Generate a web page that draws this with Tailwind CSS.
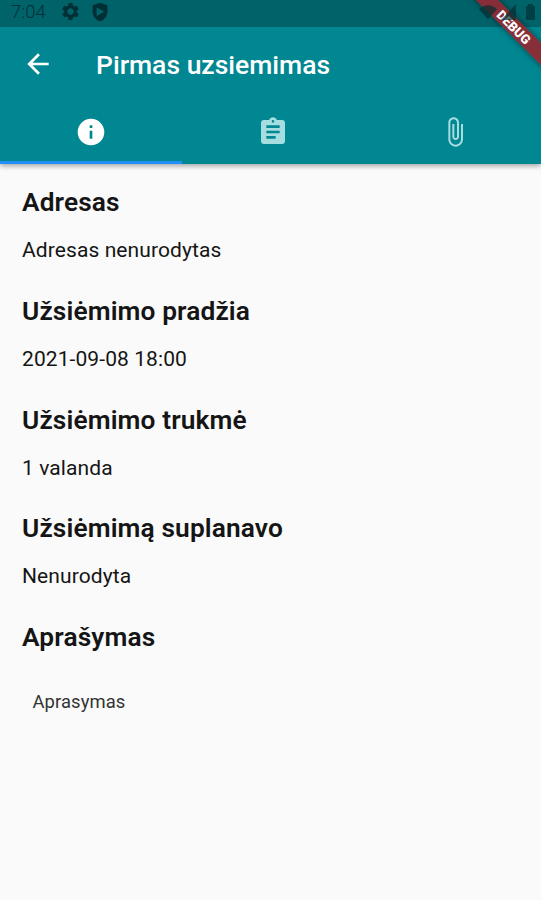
<!DOCTYPE html>
<html lang="lt">
<head>
    <meta charset="UTF-8" />
    <meta name="viewport" content="width=device-width, initial-scale=1.0" />
    <title>Pirmas uzsiemimas</title>
    <script src="https://cdn.jsdelivr.net/npm/@tailwindcss/browser@4"></script>
</head>

<body class="bg-[#fafafa] font-['Roboto',sans-serif]">
    <div class="relative h-[900px] w-[541px] overflow-hidden">
        <!-- Header -->
        <header class="relative h-[164px] bg-[#008791] shadow-[0_2px_5px_rgba(0,0,0,0.35)]">
            <!-- Status bar -->
            <div class="flex h-[27px] items-center bg-[#00636a] pb-[4px] pl-[11px] text-[#003035]">
                <span class="w-[49px] text-[18.5px] leading-6 font-light">7:04</span>
                <svg class="h-[21px] w-[21px]" viewBox="0 0 24 24" fill="currentColor">
                    <path d="M19.14 12.94c.04-.3.06-.61.06-.94 0-.32-.02-.64-.07-.94l2.03-1.58a.49.49 0 0 0 .12-.61l-1.92-3.32a.488.488 0 0 0-.59-.22l-2.39.96c-.5-.38-1.03-.7-1.62-.94l-.36-2.54a.484.484 0 0 0-.48-.41h-3.84c-.24 0-.43.17-.47.41l-.36 2.54c-.59.24-1.13.57-1.62.94l-2.39-.96c-.22-.08-.47 0-.59.22L2.74 8.87c-.12.21-.08.47.12.61l2.03 1.58c-.05.3-.09.63-.09.94s.02.64.07.94l-2.03 1.58a.49.49 0 0 0-.12.61l1.92 3.32c.12.22.37.29.59.22l2.39-.96c.5.38 1.03.7 1.62.94l.36 2.54c.05.24.24.41.48.41h3.84c.24 0 .44-.17.47-.41l.36-2.54c.59-.24 1.13-.56 1.62-.94l2.39.96c.22.08.47 0 .59-.22l1.92-3.32c.12-.22.07-.47-.12-.61l-2.01-1.58zM12 15.6c-1.98 0-3.6-1.62-3.6-3.6s1.62-3.6 3.6-3.6 3.6 1.62 3.6 3.6-1.62 3.6-3.6 3.6z" />
                </svg>
                <svg class="ml-[9px] h-[20px] w-[20px]" viewBox="0 0 24 24" fill="currentColor" fill-rule="evenodd">
                    <path d="M12 1 3 4v7c0 5.55 3.84 10.74 9 12 5.16-1.26 9-6.45 9-12V4zM8 6.5v10.5L17 11.5z" />
                </svg>
                <!-- Shown over the debug banner -->
                <div class="relative z-10 ml-auto flex items-center pr-[5px] text-[#002f34]/70">
                    <svg class="h-[18px] w-[20px]" viewBox="0 0 22 18" fill="currentColor">
                        <path d="M11 17 1 6C7 0 15 0 21 6z" />
                    </svg>
                    <svg class="ml-[3px] h-[18px] w-[16px]" viewBox="0 0 16 18" fill="currentColor">
                        <path d="M15 1v16H0z" />
                    </svg>
                    <svg class="ml-[8px] h-[18px] w-[11px]" viewBox="0 0 11 18" fill="currentColor">
                        <path d="M3 1h5v2h2v14H1V3h2z" />
                    </svg>
                </div>
            </div>

            <!-- Title -->
            <div class="flex h-[75px] items-center pb-[2px] pl-[21.5px] text-white">
                <svg class="h-8 w-8" viewBox="0 0 24 24" fill="currentColor">
                    <path d="M20 11H7.830l5.590-5.590L12 4l-8 8 8 8 1.410-1.410L7.830 13H20v-2z" />
                </svg>
                <h1 class="ml-[42.5px] pt-[3px] text-[26.5px] font-medium">Pirmas uzsiemimas</h1>
            </div>

            <!-- Tabs -->
            <nav class="-mr-[6px] grid h-[62px] grid-cols-3 text-[#a6dde0]">
                <div class="flex items-center justify-center border-b-[3px] border-[#2090f8] text-white">
                    <svg class="h-8 w-8" viewBox="0 0 24 24" fill="currentColor">
                        <path d="M12 2C6.480 2 2 6.480 2 12s4.480 10 10 10 10-4.480 10-10S17.520 2 12 2zm1 15h-2v-6h2v6zm0-8h-2V7h2v2z" />
                    </svg>
                </div>
                <div class="flex items-center justify-center pb-[3px]">
                    <svg class="h-8 w-8" viewBox="0 0 24 24" fill="currentColor">
                        <path d="M19 3h-4.180C14.400 1.840 13.300 1 12 1c-1.300 0-2.400.840-2.820 2H5c-1.100 0-2 .900-2 2v14c0 1.100.900 2 2 2h14c1.100 0 2-.900 2-2V5c0-1.100-.900-2-2-2zm-7 0c.550 0 1 .450 1 1s-.450 1-1 1-1-.450-1-1 .450-1 1-1zm2 14H7v-2h7v2zm3-4H7v-2h10v2zm0-4H7V7h10v2z" />
                    </svg>
                </div>
                <div class="flex items-center justify-center pr-[2px] pb-[2px]">
                    <svg class="h-8 w-8" viewBox="0 0 24 24" fill="currentColor">
                        <path d="M16.500 6v11.500c0 2.210-1.790 4-4 4s-4-1.790-4-4V5c0-1.380 1.120-2.500 2.500-2.500s2.500 1.120 2.500 2.500v10.500c0 .550-.450 1-1 1s-1-.450-1-1V6H10v9.500c0 1.380 1.120 2.500 2.500 2.500s2.500-1.120 2.500-2.500V5c0-2.210-1.790-4-4-4S7 2.790 7 5v12.500c0 3.040 2.460 5.500 5.500 5.500s5.500-2.460 5.500-5.500V6h-1.500z" />
                    </svg>
                </div>
            </nav>
        </header>

        <!-- Details -->
        <main class="px-[22px] pt-[20px] text-[#151515]">
            <section class="h-[108.8px]">
                <h2 class="text-[26.3px] leading-9 font-semibold tracking-[0.12px]">Adresas</h2>
                <p class="mt-[18px] text-[21px] leading-6 tracking-[0.09px]">Adresas nenurodytas</p>
            </section>
            <section class="h-[108.8px]">
                <h2 class="text-[26.3px] leading-9 font-semibold tracking-[0.12px]">Užsiėmimo pradžia</h2>
                <p class="mt-[18px] text-[21px] leading-6 tracking-[0.09px]">2021-09-08 18:00</p>
            </section>
            <section class="h-[108.8px]">
                <h2 class="text-[26.3px] leading-9 font-semibold tracking-[0.12px]">Užsiėmimo trukmė</h2>
                <p class="mt-[18px] text-[21px] leading-6 tracking-[0.09px]">1 valanda</p>
            </section>
            <section class="h-[108.8px]">
                <h2 class="text-[26.3px] leading-9 font-semibold tracking-[0.12px]">Užsiėmimą suplanavo</h2>
                <p class="mt-[18px] text-[21px] leading-6 tracking-[0.09px]">Nenurodyta</p>
            </section>
            <section>
                <h2 class="text-[26.3px] leading-9 font-semibold tracking-[0.12px]">Aprašymas</h2>
                <p class="mt-[35px] ml-[10.5px] text-[18.4px] leading-6 tracking-[0.09px] text-[#333]">Aprasymas</p>
            </section>
        </main>

        <!-- Debug banner -->
        <div class="absolute top-[19px] left-[434px] flex h-[16px] w-[160px] rotate-45 items-center justify-center bg-[#8e2a35]/95 text-[13px] leading-none font-black text-white shadow-[0_0_6px_rgba(0,0,0,0.5)]">DEBUG</div>
    </div>
</body>

</html>
